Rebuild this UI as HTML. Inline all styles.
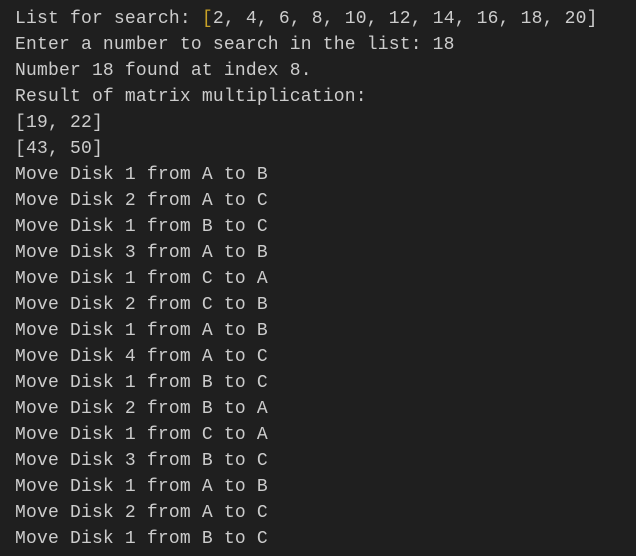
<!DOCTYPE html>
<html><head><style>
html,body{margin:0;padding:0;background:#1f1f1f;width:636px;height:556px;overflow:hidden}
pre{margin:0;position:absolute;left:15px;top:6px;font-family:"Liberation Mono",monospace;font-size:18px;letter-spacing:0.19px;line-height:26px;color:#cccccc}
.y{color:#c9a227}
</style></head><body>
<pre>List for search: <span class="y">[</span>2, 4, 6, 8, 10, 12, 14, 16, 18, 20]
Enter a number to search in the list: 18
Number 18 found at index 8.
Result of matrix multiplication:
[19, 22]
[43, 50]
Move Disk 1 from A to B
Move Disk 2 from A to C
Move Disk 1 from B to C
Move Disk 3 from A to B
Move Disk 1 from C to A
Move Disk 2 from C to B
Move Disk 1 from A to B
Move Disk 4 from A to C
Move Disk 1 from B to C
Move Disk 2 from B to A
Move Disk 1 from C to A
Move Disk 3 from B to C
Move Disk 1 from A to B
Move Disk 2 from A to C
Move Disk 1 from B to C</pre>
</body></html>
